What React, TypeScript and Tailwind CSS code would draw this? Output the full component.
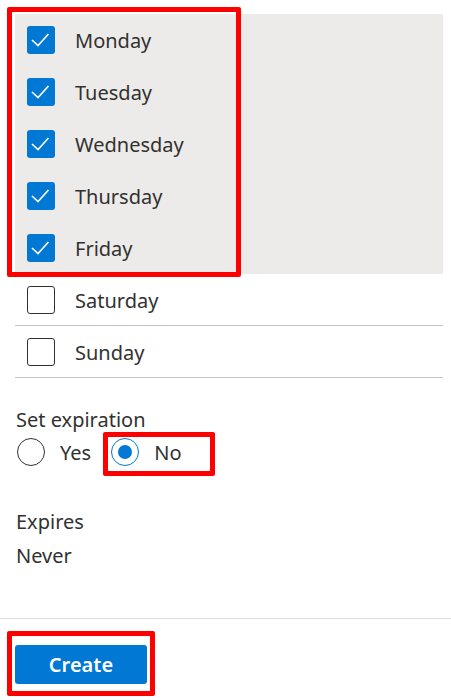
import React from "react";

const days = [
  { name: "Monday", checked: true },
  { name: "Tuesday", checked: true },
  { name: "Wednesday", checked: true },
  { name: "Thursday", checked: true },
  { name: "Friday", checked: true },
  { name: "Saturday", checked: false },
  { name: "Sunday", checked: false },
];

const CheckBox = ({ checked }: { checked: boolean }) =>
  checked ? (
    <span className="w-[28px] h-[28px] rounded-[3px] bg-[#0078d4] flex items-center justify-center shrink-0">
      <svg width="28" height="28" viewBox="0 0 28 28" fill="none">
        <path d="M5 14 L11 19.5 L21.5 8" stroke="white" strokeWidth="1.6" />
      </svg>
    </span>
  ) : (
    <span className="w-[28px] h-[28px] rounded-[3px] border border-[#323130] bg-white shrink-0" />
  );

const Radio = ({ checked }: { checked: boolean }) => (
  <span
    className={
      checked
        ? "w-[28px] h-[28px] rounded-full border border-[#0078d4] flex items-center justify-center shrink-0"
        : "w-[28px] h-[28px] rounded-full border border-[#323130] shrink-0"
    }
  >
    {checked && <span className="w-[14px] h-[14px] rounded-full bg-[#0078d4]" />}
  </span>
);

const DayRow = ({ name, checked }: { name: string; checked: boolean }) => (
  <div
    className={
      checked
        ? "h-[52px] flex items-center pl-3 gap-5"
        : "h-[52px] flex items-center pl-3 gap-5 border-b border-[#c8c6c4]"
    }
  >
    <CheckBox checked={checked} />
    <span className="pt-[2px]">{name}</span>
  </div>
);

export default function App() {
  const checkedDays = days.filter((d) => d.checked);
  const otherDays = days.filter((d) => !d.checked);

  return (
    <div
      className="relative w-[451px] h-[700px] bg-white text-[#323130] text-[20px] leading-[28px] overflow-hidden"
      style={{ fontFamily: '"Noto Sans", "Open Sans", sans-serif' }}
    >
      <div className="pt-[14px] ml-[15px] w-[428px]">
        {/* checked group */}
        <div className="relative bg-[#edebe9]">
          {checkedDays.map((d) => (
            <DayRow key={d.name} name={d.name} checked />
          ))}
          <div className="absolute left-[-8px] top-[-7px] w-[234px] h-[270px] border-[5px] border-[#ff0000] rounded-[2px]" />
        </div>
        {otherDays.map((d) => (
          <DayRow key={d.name} name={d.name} checked={false} />
        ))}
      </div>

      <div className="ml-[16px] mt-[28px]">
        <div>Set expiration</div>
        <div className="flex items-center mt-1 h-[28px]">
          <div className="flex items-center gap-[15px] ml-px">
            <Radio checked={false} />
            <span className="pt-px">Yes</span>
          </div>
          <div className="relative flex items-center gap-[15px] ml-[20px]">
            <Radio checked />
            <span className="pt-px">No</span>
            <div className="absolute left-[-8px] top-[-6px] w-[112px] h-[44px] border-[5px] border-[#ff0000] rounded-[2px]" />
          </div>
        </div>
        <div className="mt-[39px] leading-[34px]">Expires</div>
        <div className="leading-[34px]">Never</div>
      </div>

      <div className="mt-[45px] border-t border-[#e1dfdd]" />

      <div className="relative ml-[15px] mt-[26px] w-[132px]">
        <button className="w-[132px] h-[39px] rounded-[3px] bg-[#0078d4] text-white font-semibold text-[20px]">
          Create
        </button>
        <div className="absolute left-[-8px] top-[-14px] w-[148px] h-[65px] border-[5px] border-[#ff0000] rounded-[2px]" />
      </div>
    </div>
  );
}
